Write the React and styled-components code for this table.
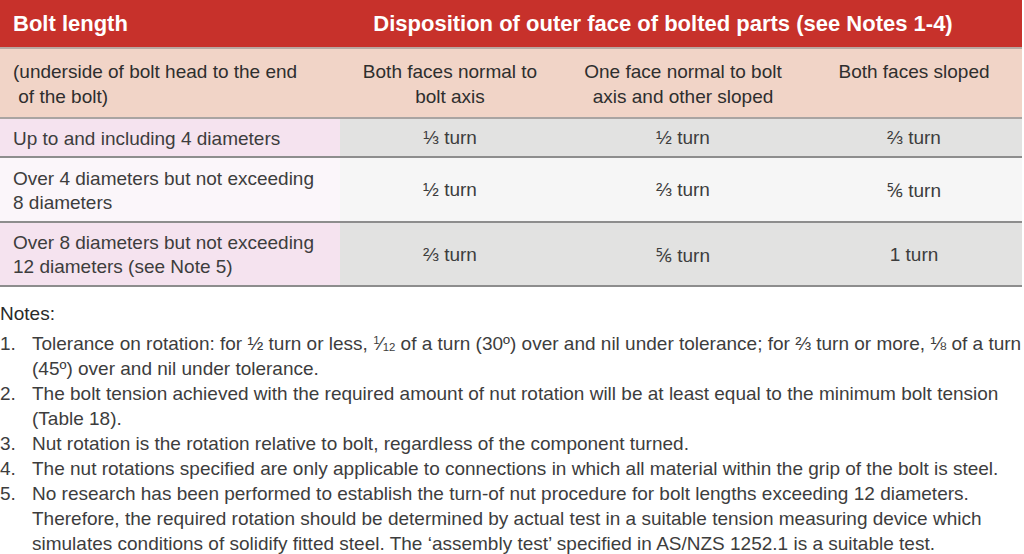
import React from "react";
import styled, { createGlobalStyle } from "styled-components";

const GlobalStyle = createGlobalStyle`
  body {
    margin: 0;
    background: #ffffff;
    font-family: "Liberation Sans", Arial, sans-serif;
    color: #3d3d3d;
  }
`;

const Page = styled.div`
  width: 1024px;
  height: 554px;
  overflow: hidden;
`;

const Table = styled.table`
  width: 1022px;
  border-collapse: collapse;
  table-layout: fixed;
  font-size: 19px;
`;

const HeadCell = styled.th`
  background: #c7312b;
  color: #ffffff;
  font-weight: bold;
  font-size: 22px;
  height: 47px;
  padding: 0 ${(p) => (p.$left ? "0 0 13px" : "36px 0 0")};
  text-align: ${(p) => (p.$left ? "left" : "center")};
  border-bottom: 2px solid #b9a8a2;
`;

const SubCell = styled.td`
  background: #f1d4c7;
  color: #2e2e2e;
  height: 58px;
  line-height: 25px;
  padding: 10px ${(p) => (p.$left ? "8px 0 13px" : "6px 0")};
  text-align: ${(p) => (p.$left ? "left" : "center")};
  vertical-align: top;
  border-bottom: 2px solid #a9a4a2;
`;

const Row = styled.tr`
  height: ${(p) => p.$h}px;
`;

const LabelCell = styled.td`
  background: ${(p) => (p.$light ? "#fbf6fa" : "#f5e3ef")};
  padding: 2px 8px 0 13px;
  line-height: 24px;
  border-bottom: 2px solid #8d8d8d;
`;

const ValueCell = styled.td`
  background: ${(p) => (p.$light ? "#f6f6f6" : "#e2e2e1")};
  text-align: center;
  padding-top: 2px;
  border-bottom: 2px solid #8d8d8d;
`;

const Notes = styled.div`
  padding-top: 14px;
  font-size: 19px;
  line-height: 25px;
`;

const NotesTitle = styled.div`
  color: #2a2a2a;
  margin-bottom: 5px;
`;

const NoteItem = styled.div`
  display: grid;
  grid-template-columns: 32px 1fr;
`;

const Line = styled.div`
  white-space: nowrap;
`;

const Sup = styled.sup`
  font-size: 0.6em;
  vertical-align: 0.5em;
  line-height: 0;
`;

const Sub = styled.sub`
  font-size: 0.6em;
  vertical-align: -0.1em;
  line-height: 0;
`;

const Twelfth = () => (
  <span>
    <Sup>1</Sup>⁄<Sub>12</Sub>
  </span>
);

const rows = [
  { label: ["Up to and including 4 diameters"], values: ["⅓ turn", "½ turn", "⅔ turn"], h: 39 },
  { label: ["Over 4 diameters but not exceeding", "8 diameters"], values: ["½ turn", "⅔ turn", "⅚ turn"], h: 65, light: true },
  { label: ["Over 8 diameters but not exceeding", "12 diameters (see Note 5)"], values: ["⅔ turn", "⅚ turn", "1 turn"], h: 64 },
];

const notes = [
  [
    <>Tolerance on rotation: for ½ turn or less, <Twelfth /> of a turn (30º) over and nil under tolerance; for ⅔ turn or more, ⅛ of a turn</>,
    "(45º) over and nil under tolerance.",
  ],
  [
    "The bolt tension achieved with the required amount of nut rotation will be at least equal to the minimum bolt tension",
    "(Table 18).",
  ],
  ["Nut rotation is the rotation relative to bolt, regardless of the component turned."],
  ["The nut rotations specified are only applicable to connections in which all material within the grip of the bolt is steel."],
  [
    "No research has been performed to establish the turn-of nut procedure for bolt lengths exceeding 12 diameters.",
    "Therefore, the required rotation should be determined by actual test in a suitable tension measuring device which",
    "simulates conditions of solidify fitted steel. The ‘assembly test’ specified in AS/NZS 1252.1 is a suitable test.",
  ],
];

export default function App() {
  return (
    <Page>
      <GlobalStyle />
      <Table>
        <colgroup>
          <col style={{ width: 340 }} />
          <col style={{ width: 220 }} />
          <col style={{ width: 246 }} />
          <col style={{ width: 216 }} />
        </colgroup>
        <thead>
          <tr>
            <HeadCell $left>Bolt length</HeadCell>
            <HeadCell colSpan={3}>Disposition of outer face of bolted parts (see Notes 1-4)</HeadCell>
          </tr>
        </thead>
        <tbody>
          <tr>
            <SubCell $left>
              (underside of bolt head to the end
              <br />
              &nbsp;of the bolt)
            </SubCell>
            <SubCell>Both faces normal to bolt axis</SubCell>
            <SubCell>One face normal to bolt axis and other sloped</SubCell>
            <SubCell>Both faces sloped</SubCell>
          </tr>
          {rows.map((r, i) => (
            <Row key={i} $h={r.h}>
              <LabelCell $light={r.light}>
                {r.label.map((l, j) => (
                  <div key={j}>{l}</div>
                ))}
              </LabelCell>
              {r.values.map((v, j) => (
                <ValueCell key={j} $light={r.light}>
                  {v}
                </ValueCell>
              ))}
            </Row>
          ))}
        </tbody>
      </Table>
      <Notes>
        <NotesTitle>Notes:</NotesTitle>
        {notes.map((lines, i) => (
          <NoteItem key={i}>
            <span>{i + 1}.</span>
            <div>
              {lines.map((l, j) => (
                <Line key={j}>{l}</Line>
              ))}
            </div>
          </NoteItem>
        ))}
      </Notes>
    </Page>
  );
}
